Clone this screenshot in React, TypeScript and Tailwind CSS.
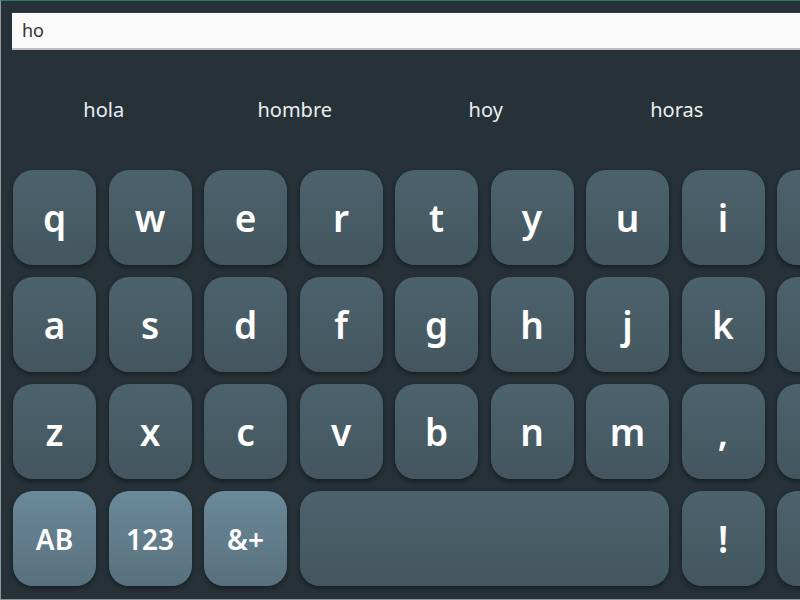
import React from 'react';

const rows: string[][] = [
  ['q', 'w', 'e', 'r', 't', 'y', 'u', 'i', '', ''],
  ['a', 's', 'd', 'f', 'g', 'h', 'j', 'k', '', ''],
  ['z', 'x', 'c', 'v', 'b', 'n', 'm', ',', '', ''],
];

const suggestions = ['hola', 'hombre', 'hoy', 'horas', ''];

const Key = ({ label, wide = false, special = false }: { label: string; wide?: boolean; special?: boolean }) => (
  <div
    className={`flex h-[95px] items-center justify-center rounded-[20px] shadow-[0_2px_5px_rgba(0,0,0,0.45)] ${
      wide ? 'col-span-4' : ''
    } ${
      special
        ? 'bg-linear-to-b from-[#6b8999] to-[#58707d] text-[28px] font-semibold'
        : 'bg-linear-to-b from-[#4c626c] to-[#43565f] text-[37px] font-semibold'
    } text-white`}
  >
    {label}
  </div>
);

export default function App() {
  return (
    <div
      className="h-[600px] w-[800px] overflow-hidden border-t border-l border-b border-t-[#2c7b6d] border-l-[#8d9396] border-b-[#8d9396] bg-[#263238]"
      style={{ fontFamily: '"Noto Sans", "Open Sans", sans-serif' }}
    >
      {/* Text field */}
      <div className="pt-[11px] pl-[11px]">
        <div className="flex h-[38px] w-[820px] items-center border-t border-b-2 border-t-[#3a3f42] border-b-[#bdbdbd] bg-[#fafafa] pl-[10px] text-[18px] text-[#333]">
          ho
        </div>
      </div>

      <div className="pl-[12px]">
        {/* Suggestions */}
        <div className="grid h-[120px] w-max grid-cols-[repeat(10,83px)] gap-x-[12.5px]">
          {suggestions.map((s, i) => (
            <div key={i} className="col-span-2 flex items-center justify-center pl-[3px] text-[20px] text-[#eceff1]">
              {s}
            </div>
          ))}
        </div>

        {/* Keys */}
        <div className="grid w-max grid-cols-[repeat(10,83px)] gap-x-[12.5px] gap-y-[12px]">
          {rows.flat().map((k, i) => (
            <Key key={i} label={k} />
          ))}
          <Key label="AB" special />
          <Key label="123" special />
          <Key label="&+" special />
          <Key label="" wide />
          <Key label="!" />
          <Key label="" />
          <Key label="" />
        </div>
      </div>
    </div>
  );
}
